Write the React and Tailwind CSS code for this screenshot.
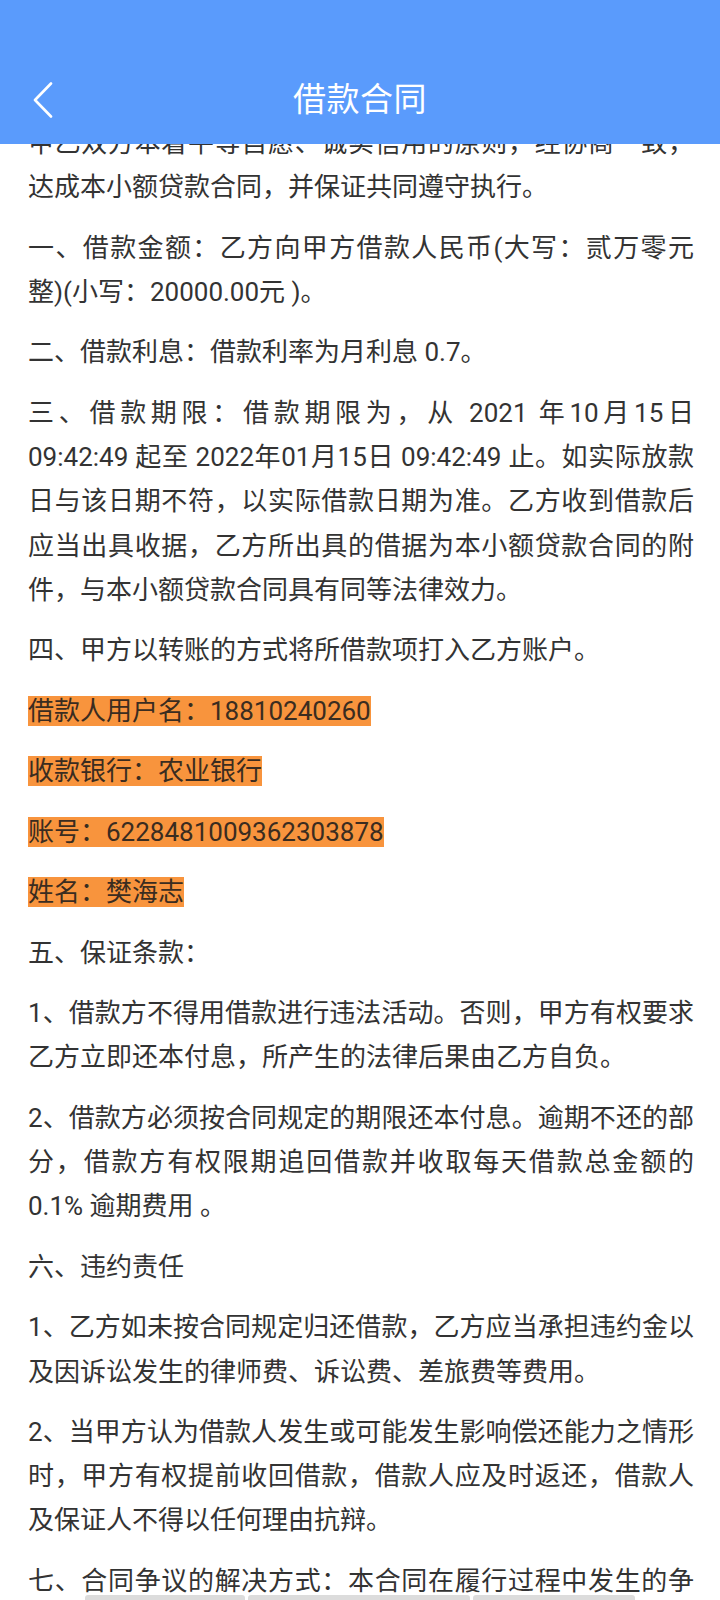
const paragraphs = [
  '甲乙双方本着平等自愿、诚实信用的原则，经协商一致，达成本小额贷款合同，并保证共同遵守执行。',
  '一、借款金额：乙方向甲方借款人民币(大写：贰万零元整)(小写：20000.00元 )。',
  '二、借款利息：借款利率为月利息 0.7。',
  '三、借款期限：借款期限为，从 2021 年10月15日 09:42:49 起至 2022年01月15日 09:42:49 止。如实际放款日与该日期不符，以实际借款日期为准。乙方收到借款后应当出具收据，乙方所出具的借据为本小额贷款合同的附件，与本小额贷款合同具有同等法律效力。',
  '四、甲方以转账的方式将所借款项打入乙方账户。',
]

const account = [
  '借款人用户名：18810240260',
  '收款银行：农业银行',
  '账号：6228481009362303878',
  '姓名：樊海志',
]

const terms = [
  '五、保证条款：',
  '1、借款方不得用借款进行违法活动。否则，甲方有权要求乙方立即还本付息，所产生的法律后果由乙方自负。',
  '2、借款方必须按合同规定的期限还本付息。逾期不还的部分，借款方有权限期追回借款并收取每天借款总金额的0.1% 逾期费用 。',
  '六、违约责任',
  '1、乙方如未按合同规定归还借款，乙方应当承担违约金以及因诉讼发生的律师费、诉讼费、差旅费等费用。',
  '2、当甲方认为借款人发生或可能发生影响偿还能力之情形时，甲方有权提前收回借款，借款人应及时返还，借款人及保证人不得以任何理由抗辩。',
  '七、合同争议的解决方式：本合同在履行过程中发生的争议，由当事人双方友好协商解决；协商不成的，可依法向人民法院起诉。',
]

function Para({ children }) {
  return <p className="mb-[16.3px] text-justify">{children}</p>
}

export default function App() {
  return (
    <div className="relative h-[1600px] overflow-hidden bg-white" style={{ fontFamily: "Roboto, 'Noto Sans CJK SC', sans-serif" }}>
      <header className="absolute inset-x-0 top-0 z-10 h-[144px] bg-[#5a9bfc] pt-[55px]">
        <div className="grid h-[89px] grid-cols-[1fr_auto_1fr] items-center">
          <button className="justify-self-start pl-[32px]">
            <svg width="22" height="36" viewBox="0 0 22 36" fill="none" className="block">
              <path d="M19 1.5 L3 18 L19 34.5" stroke="#fff" strokeWidth="2.6" strokeLinecap="round" strokeLinejoin="round" />
            </svg>
          </button>
          <h1 className="text-[33px] font-normal tracking-[0.5px] text-white">借款合同</h1>
          <div />
        </div>
      </header>

      <main className="pl-[28px] pr-[26px] pt-[121px] text-[26px] leading-[44.2px] text-[#333]">
        {paragraphs.map((t, i) => <Para key={i}>{t}</Para>)}
        {account.map((t, i) => (
          <Para key={'a' + i}><span className="bg-[#f8943d] text-[#3a2c20]">{t}</span></Para>
        ))}
        {terms.map((t, i) => <Para key={'t' + i}>{t}</Para>)}
      </main>

      <div className="absolute bottom-0 left-[85px] flex h-[5px] gap-[3px]">
        <div className="w-[160px] rounded-t-[3px] bg-[#dcdcdc]" />
        <div className="w-[222px] rounded-t-[3px] bg-[#dcdcdc]" />
        <div className="w-[162px] rounded-t-[3px] bg-[#dcdcdc]" />
      </div>
    </div>
  )
}
